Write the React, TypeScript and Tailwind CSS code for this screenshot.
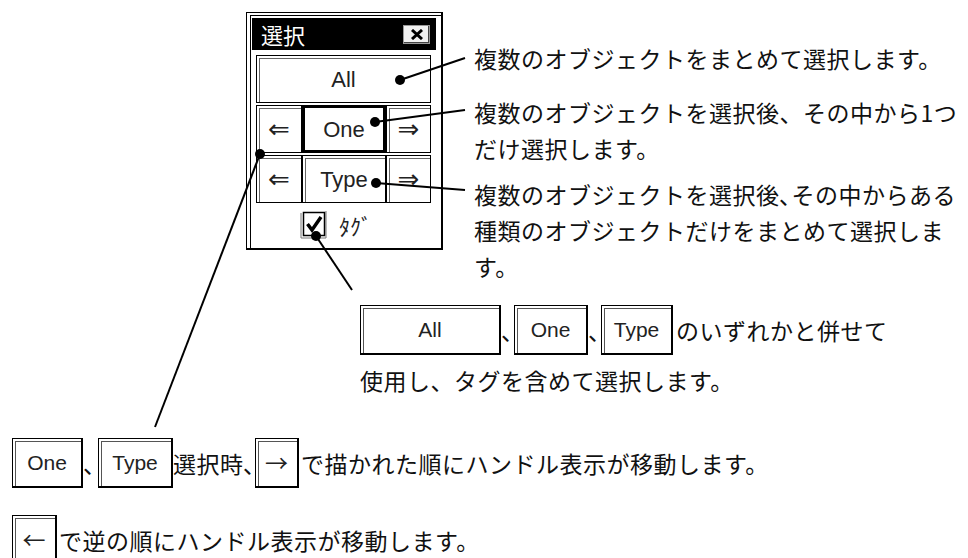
import React from "react";

const jp = "font-['Noto_Sans_CJK_JP',sans-serif]";
const latin = "font-['Liberation_Sans',Arial,sans-serif]";

// 3D style key used inside the caption text
const Key: React.FC<{ w: string; children: React.ReactNode }> = ({ w, children }) => (
  <div
    className={`${w} h-[50px] shrink-0 flex items-center justify-center border-t border-l border-r-2 border-b-2 border-black bg-white shadow-[inset_2px_2px_0_white,inset_3px_3px_0_#555] text-[21px] tracking-normal text-[#222] ${latin}`}
  >
    {children}
  </div>
);

const Cell: React.FC<{ children: React.ReactNode; selected?: boolean }> = ({ children, selected }) => (
  <div
    className={
      selected
        ? "flex items-center justify-center border-[3px] border-black bg-white"
        : "flex items-center justify-center border border-black bg-white shadow-[inset_2px_2px_0_white,inset_3px_3px_0_#666]"
    }
  >
    {children}
  </div>
);

const Arrow: React.FC<{ dir: "l" | "r" }> = ({ dir }) => (
  <span className="font-['DejaVu_Sans',sans-serif] text-[26px] text-[#222] leading-none">{dir === "l" ? "⇐" : "⇒"}</span>
);

const SelectPanel: React.FC = () => (
  <div className="w-[197px] h-[238px] shrink-0 border-t border-l border-r-2 border-b-2 border-black flex bg-white">
    <div className="ml-[3px] mt-[2px] flex-1 border-t border-l border-black flex flex-col">
      {/* title bar */}
      <div className="ml-[1px] mr-[5px] mt-[2px] h-[32px] bg-black flex items-center justify-between pl-[9px] pr-[6px]">
        <span className={`${jp} text-[22px] leading-none text-white`}>選択</span>
        <div className="w-[27px] h-[19px] bg-[#f2f2f2] border border-[#999] shadow-[inset_-1px_-1px_0_#444] flex items-center justify-center">
          <svg width="14" height="11" viewBox="0 0 14 11">
            <path d="M2 1 L12 10 M12 1 L2 10" stroke="#000" strokeWidth="3" />
          </svg>
        </div>
      </div>

      <div className="ml-[5px] mr-[10px] flex flex-col">
        <div className="mt-[5px] h-[48px] grid">
          <Cell>
            <span className={`${latin} text-[22px] text-[#222]`}>All</span>
          </Cell>
        </div>
        <div className="mt-[2px] h-[48px] grid grid-cols-[46px_84px_45px]">
          <Cell><Arrow dir="l" /></Cell>
          <Cell selected>
            <span className={`${latin} text-[22px] text-[#222]`}>One</span>
          </Cell>
          <Cell><Arrow dir="r" /></Cell>
        </div>
        <div className="mt-[2px] h-[48px] grid grid-cols-[46px_84px_45px]">
          <Cell><Arrow dir="l" /></Cell>
          <Cell>
            <span className={`${latin} text-[22px] text-[#222]`}>Type</span>
          </Cell>
          <Cell><Arrow dir="r" /></Cell>
        </div>
        <div className="mt-[7px] h-[30px] flex items-center pl-[43px] gap-[10px]">
          <svg width="30" height="30" viewBox="0 0 30 30">
            <path d="M2 3 V28 H27" stroke="#777" strokeWidth="1" fill="none" />
            <path d="M27 1 V28" stroke="#777" strokeWidth="1" fill="none" />
            <rect x="4.5" y="2.5" width="21" height="23" fill="#fff" stroke="#000" strokeWidth="1.5" />
            <path d="M8.5 14 L13 20 L22 7" stroke="#000" strokeWidth="3.5" fill="none" />
          </svg>
          <span className={`${jp} text-[22px] leading-none text-[#222]`}>ﾀｸﾞ</span>
        </div>
      </div>
    </div>
  </div>
);

const Leaders: React.FC = () => {
  const lines: [number, number, number, number][] = [
    [400, 80, 465, 58],
    [375, 122, 465, 110],
    [376, 183, 465, 190],
    [316, 236, 352, 290],
    [260, 154, 155, 427],
  ];
  return (
    <svg className="absolute left-0 top-0 pointer-events-none" width="968" height="558" viewBox="0 0 968 558">
      {lines.map(([x1, y1, x2, y2], i) => (
        <g key={i}>
          <line x1={x1} y1={y1} x2={x2} y2={y2} stroke="#000" strokeWidth="2" />
          <circle cx={x1} cy={y1} r="5" fill="#000" />
        </g>
      ))}
    </svg>
  );
};

export default function App() {
  return (
    <div className={`relative w-[968px] h-[558px] overflow-hidden bg-white text-[#111] ${jp}`}>
      {/* panel + descriptions */}
      <div className="flex items-start pt-[12px] pl-[246px]">
        <SelectPanel />
        <div className="ml-[31px] pt-[28px] text-[23px] leading-[36px] tracking-[0.5px] whitespace-nowrap">
          <p>複数のオブジェクトをまとめて選択します。</p>
          <p className="mt-[18px]">
            複数のオブジェクトを選択後、その中から1つ
            <br />
            だけ選択します。
          </p>
          <p className="mt-[10px]">
            複数のオブジェクトを選択後､その中からある
            <br />
            種類のオブジェクトだけをまとめて選択しま
            <br />
            す。
          </p>
        </div>
      </div>

      {/* tag note */}
      <div className="mt-[21px] pl-[360px] h-[50px] flex items-center text-[23px] tracking-[0.5px] whitespace-nowrap">
        <Key w="w-[141px]">All</Key>
        <span className="w-[13px] shrink-0">、</span>
        <Key w="w-[74px]">One</Key>
        <span className="w-[13px] shrink-0">、</span>
        <Key w="w-[72px]">Type</Key>
        <span className="ml-[3px]">のいずれかと併せて</span>
      </div>
      <p className="mt-[7px] pl-[360px] text-[23px] leading-[36px] tracking-[0.5px]">使用し、タグを含めて選択します。</p>

      {/* handle order notes */}
      <div className="mt-[40px] pl-[12px] h-[50px] flex items-center text-[23px] tracking-[0.5px] whitespace-nowrap">
        <Key w="w-[71px]">One</Key>
        <span className="w-[15px] shrink-0">、</span>
        <Key w="w-[75px]">Type</Key>
        <span className="w-[82px] shrink-0">選択時､</span>
        <Key w="w-[44px]">
          <span className={`${jp} text-[23px]`}>→</span>
        </Key>
        <span className="ml-[2px]">で描かれた順にハンドル表示が移動します。</span>
      </div>
      <div className="mt-[27px] pl-[12px] h-[50px] flex items-center text-[23px] tracking-[0.5px] whitespace-nowrap">
        <Key w="w-[45px]">
          <span className={`${jp} text-[23px]`}>←</span>
        </Key>
        <span className="ml-[2px]">で逆の順にハンドル表示が移動します。</span>
      </div>

      <Leaders />
    </div>
  );
}
